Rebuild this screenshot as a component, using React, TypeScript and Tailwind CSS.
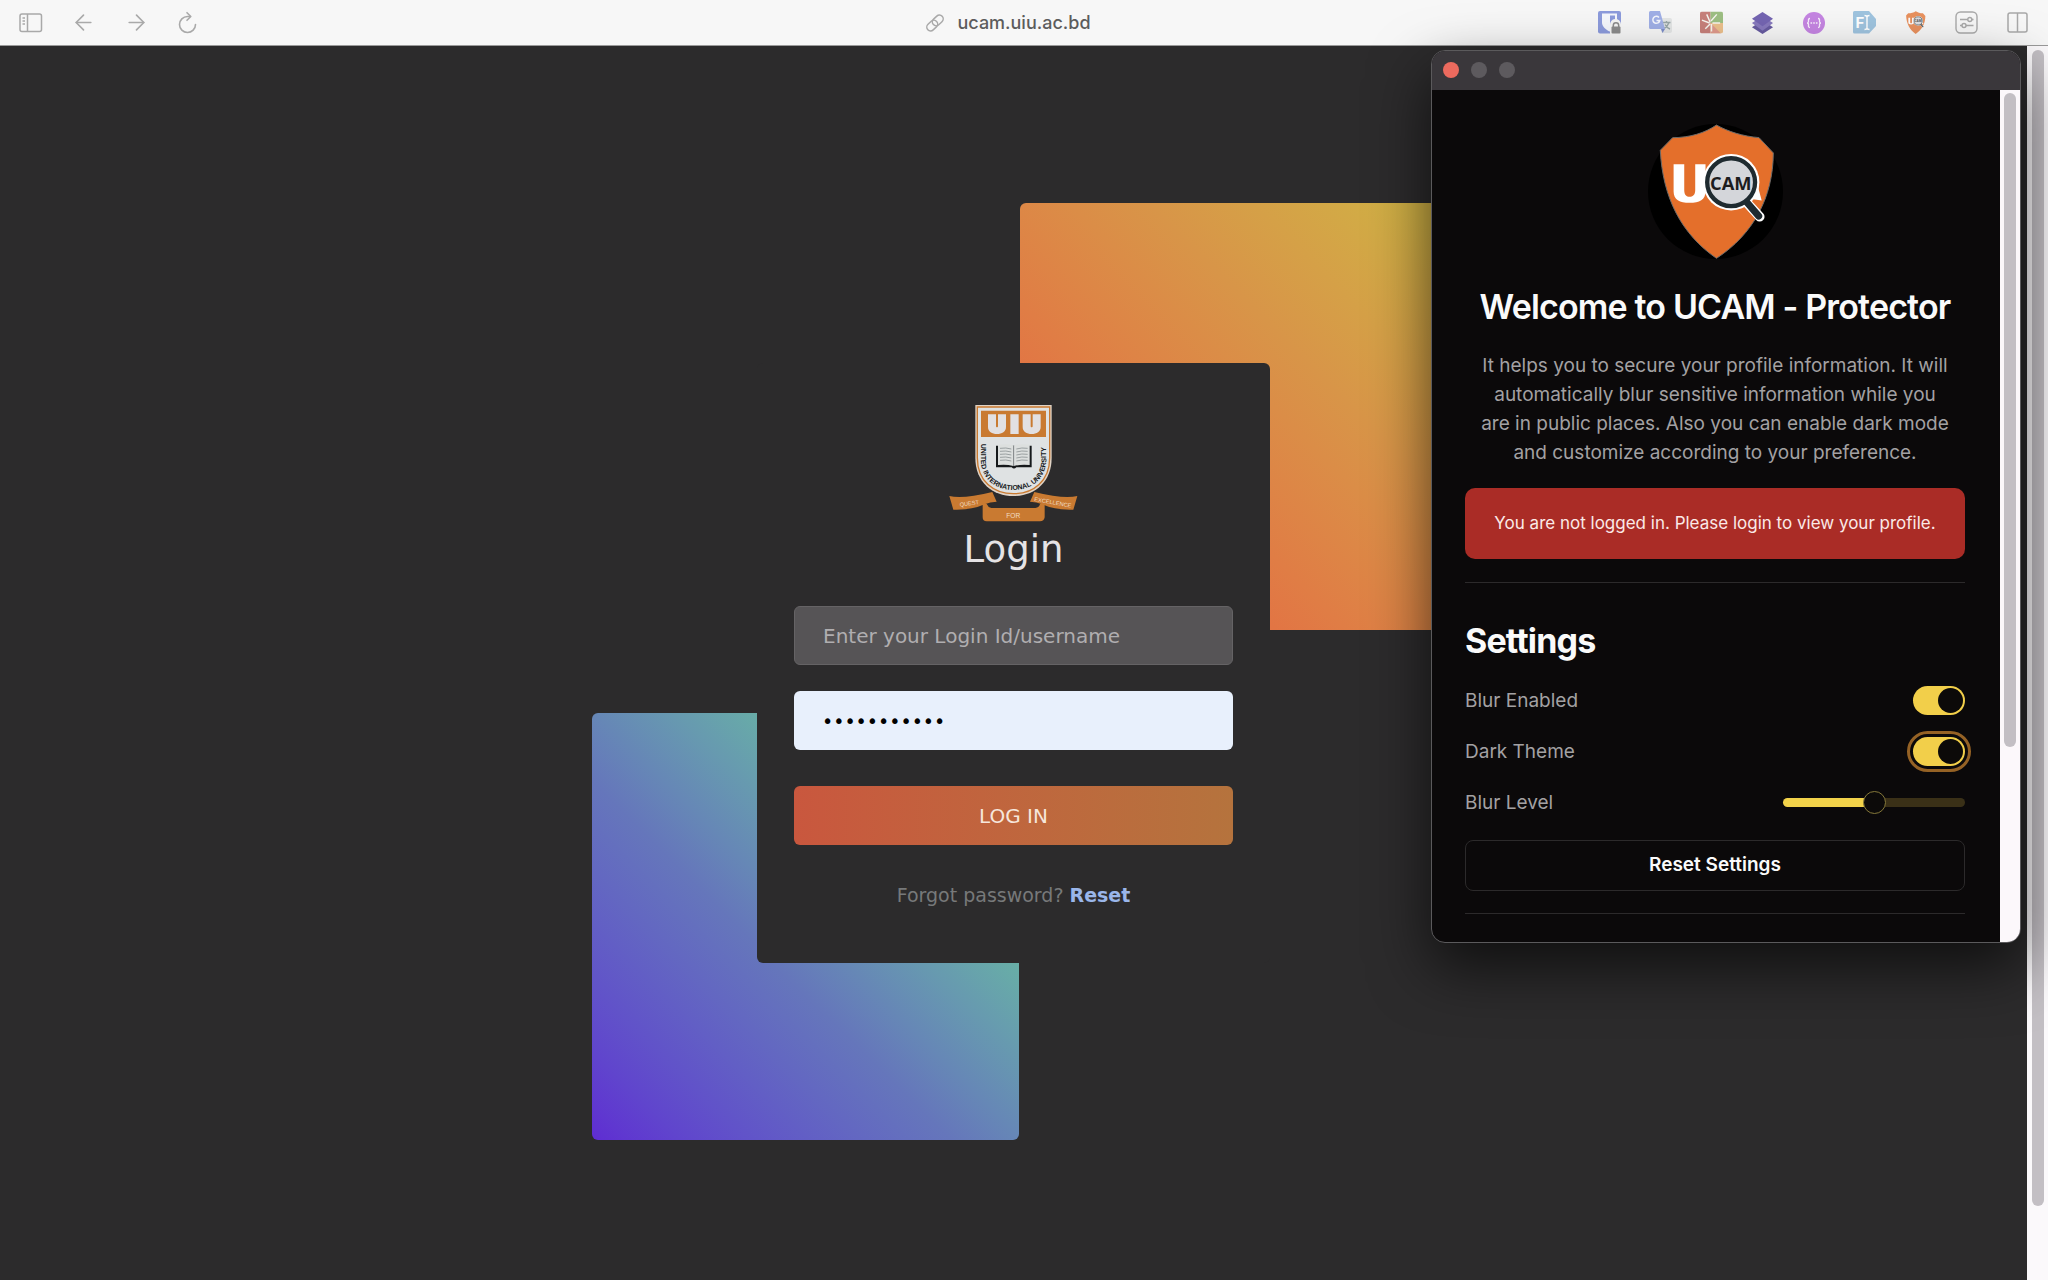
import { useState } from 'react';
import type { ReactNode } from 'react';
import { ArrowLeft, ArrowRight } from 'lucide-react';

const DESCRIPTION =
  'It helps you to secure your profile information. It will automatically blur sensitive information while you are in public places. Also you can enable dark mode and customize according to your preference.';

/* ---------- Browser toolbar ---------- */

function SidebarIcon() {
  return (
    <svg viewBox="0 0 24 20" className="w-6 h-5" fill="none" stroke="currentColor" strokeWidth="1.5">
      <rect x="1" y="1" width="21.5" height="17.5" rx="2" />
      <path d="M8.5 1v17.5M3.5 5h2.5M3.5 8h2.5M3.5 11h2.5" />
    </svg>
  );
}

function ReloadIcon() {
  return (
    <svg viewBox="0 0 20 24" className="w-5 h-6" fill="none" stroke="currentColor" strokeWidth="1.6" strokeLinecap="round" strokeLinejoin="round">
      <path d="M18.500 13.5a8 8 0 1 1-8-8h2.4" />
      <path d="M10 1.700l3.800 3.8-3.800 3.8" />
    </svg>
  );
}

function LinkIcon() {
  return (
    <svg viewBox="0 0 20 20" className="size-5" fill="none" stroke="currentColor" strokeWidth="1.5">
      <g transform="rotate(-43 10 10)">
        <rect x="0.2" y="6.2" width="12" height="7.600" rx="3.8" />
        <rect x="7.8" y="6.2" width="12" height="7.600" rx="3.8" />
      </g>
    </svg>
  );
}

function BitwardenIcon() {
  return (
    <svg viewBox="0 0 23 23" className="size-[23px]">
      <rect width="23" height="22.5" rx="2" fill="#8c9bdc" />
      <path d="M4 2.5h15v9c0 4-3.500 7-7.500 9C7.500 18.500 4 15.500 4 11.500z" fill="#f5f7fc" />
      <path d="M12 4.500h5v8c0 2-2 4-5 5.500z" fill="#8c9bdc" />
      <path d="M12 14a5.500 5.500 0 0 1 11-1v10H12z" fill="#f5f5f4" />
      <rect x="13.500" y="15.500" width="9" height="7" rx="1" fill="#8b8b8b" />
      <path d="M15.300 16v-1.500a2.700 2.700 0 0 1 5.400 0V16" fill="none" stroke="#8b8b8b" strokeWidth="1.500" />
    </svg>
  );
}

function TranslateIcon() {
  return (
    <svg viewBox="0 0 23 23" className="size-[23px]">
      <path d="M8 7h13a2 2 0 0 1 2 2v11a2 2 0 0 1-2 2h-8z" fill="#e4e6e6" />
      <path d="M13.500 11.500h8M17.500 10v1.500M20 11.500c-1 3-3 5-5 6M16 13.500c1 2 2.500 3.500 5 4.500" stroke="#98a6a6" strokeWidth="1.400" fill="none" />
      <path d="M1.500 0H11l5 18H1.500A1.500 1.500 0 0 1 0 16.500v-15A1.500 1.500 0 0 1 1.500 0z" fill="#9fafe6" />
      <path d="M12 18h4l-2.500 4z" fill="#7c8dc9" />
      <path d="M10 6.500a3.500 3.500 0 1 0 .8 3H7.500" stroke="#f4f6fd" strokeWidth="1.500" fill="none" />
    </svg>
  );
}

function BurstIcon() {
  return (
    <svg viewBox="0 0 24 23" className="w-6 h-[23px]">
      <clipPath id="burst">
        <rect width="24" height="23" rx="2" />
      </clipPath>
      <g clipPath="url(#burst)">
        <path d="M0 0h11v23H0z" fill="#c7807b" />
        <path d="M11 0h13v12H11z" fill="#9dbf83" />
        <path d="M11 12h13v11H11z" fill="#ecc08c" />
        <path d="M11 12l11 11H11z" fill="#df9a8c" />
      </g>
      <path d="M10.500 11L7 3M11.500 10l6-7M10 12l-8-3M10.500 13l-5 5M12 13v8M13 12h8" stroke="#f7f5f0" strokeWidth="1.500" />
    </svg>
  );
}

function LayersIcon() {
  return (
    <svg viewBox="0 0 24 24" className="size-6">
      <path d="M1 16.500L12 9l11 7.500L12 23.500z" fill="#675ba0" />
      <path d="M1 12L12 5l11 7-11 8z" fill="#8779bd" />
      <path d="M1 7.500L12 .5l11 7-11 8z" fill="#7465b2" />
    </svg>
  );
}

function BracesIcon() {
  return (
    <svg viewBox="0 0 22 22" className="size-[22px]">
      <circle cx="11" cy="11" r="11" fill="#c585e2" />
      <path d="M7 6.500c-2 0-1.500 1.500-1.500 3S5 11 4 11c1 0 1.500 0 1.500 1.500s-.5 3 1.500 3M15 6.500c2 0 1.500 1.500 1.500 3s.5 1.500 1.500 1.500c-1 0-1.500 0-1.500 1.500s.5 3-1.500 3" fill="none" stroke="#f8effc" strokeWidth="1.300" />
      <path d="M7.500 10.200h1.600v1.600H7.500zM10.200 10.200h1.600v1.600h-1.600zM12.900 10.200h1.600v1.600h-1.600z" fill="#f8effc" />
    </svg>
  );
}

function FontIcon() {
  return (
    <svg viewBox="0 0 23 23" className="size-[23px]">
      <path d="M1.500 0H16l7 8v7l-7 7.500H1.500A1.500 1.500 0 0 1 0 21V1.500A1.500 1.500 0 0 1 1.500 0z" fill="#9fc4df" />
      <text x="2.500" y="17" fontSize="15" fontWeight="700" fontFamily="Inter, sans-serif" fill="#fff">F</text>
      <path d="M11.500 4.500c1.500 0 2.500.5 2.500 1.500 0-1 1-1.500 2.500-1.500M14 6v11M11.500 18.500c1.500 0 2.500-.5 2.500-1.500 0 1 1 1.500 2.500 1.500" stroke="#fff" strokeWidth="1.400" fill="none" />
    </svg>
  );
}

function SlidersIcon() {
  return (
    <svg viewBox="0 0 23 23" className="size-[23px]" fill="none" stroke="#a9a9a9" strokeWidth="1.400">
      <rect x="1" y="1" width="21" height="21" rx="4.500" />
      <path d="M5 8.500h8M17 8.500h1.500M5 14.500h2M11 14.500h7.500" />
      <circle cx="14.800" cy="8.500" r="2" />
      <circle cx="9" cy="14.500" r="2" />
    </svg>
  );
}

function SplitIcon() {
  return (
    <svg viewBox="0 0 21 21" className="size-[21px]" fill="none" stroke="#a9a9a9" strokeWidth="1.500">
      <rect x="1" y="1" width="19" height="19" rx="2" />
      <path d="M10.500 1v19" />
    </svg>
  );
}

const EXTENSIONS: { label: string; icon: ReactNode }[] = [
  { label: 'Password vault', icon: <BitwardenIcon /> },
  { label: 'Translate', icon: <TranslateIcon /> },
  { label: 'Burst', icon: <BurstIcon /> },
  { label: 'Layers', icon: <LayersIcon /> },
  { label: 'JSON', icon: <BracesIcon /> },
  { label: 'Fonts', icon: <FontIcon /> },
  { label: 'UCAM Protector', icon: <ProtectorLogo className="size-[23px] opacity-75" small /> },
  { label: 'Site controls', icon: <SlidersIcon /> },
  { label: 'Split view', icon: <SplitIcon /> },
];

function Toolbar() {
  return (
    <header className="h-[46px] shrink-0 grid grid-cols-[1fr_auto_1fr] items-center bg-[#f7f7f7] border-b border-[#9a9a9a] px-[19px] text-[#a9a9a9]">
      <nav className="flex items-center gap-7">
        <button aria-label="Sidebar"><SidebarIcon /></button>
        <button aria-label="Back"><ArrowLeft size={25} strokeWidth={1.6} /></button>
        <button aria-label="Forward"><ArrowRight size={25} strokeWidth={1.6} /></button>
        <button aria-label="Reload"><ReloadIcon /></button>
      </nav>
      <button className="mr-8 flex items-center gap-3">
        <LinkIcon />
        <span className="text-[18px] leading-6 font-medium text-[#5c5c5c]">ucam.uiu.ac.bd</span>
      </button>
      <div className="flex items-center justify-end gap-7">
        {EXTENSIONS.map((ext) => (
          <button key={ext.label} aria-label={ext.label} className="w-[23px] flex justify-center">
            {ext.icon}
          </button>
        ))}
      </div>
    </header>
  );
}

/* ---------- Logos ---------- */

function ProtectorLogo({ className, small }: { className: string; small?: boolean }) {
  return (
    <svg viewBox="84 43 406 406" className={className}>
      {!small && <circle cx="287" cy="246" r="203" fill="#000" />}
      <path
        d="M290 46C325 66 370 80 418 84L461 130C460 265 400 375 290 447C185 375 128 265 121 122L158 84C210 84 255 70 290 46z"
        fill="#e46f2b"
        stroke={small ? 'none' : '#6b6a68'}
        strokeWidth="3"
      />
      <path d="M161 164h32v78c0 14 7 20 16 20s17-6 17-20v-78h31v82c0 25-18 34-48 34s-48-9-48-34z" fill="#fff" />
      <path d="M402 185l24 88-26-4z" fill="#fff" />
      <path d="M378 276l42 46" stroke="#fff" strokeWidth="29" strokeLinecap="round" />
      <circle cx="334" cy="218" r="85" fill="#fff" />
      <path d="M380 277l37 43" stroke="#1f2b30" strokeWidth="21" strokeLinecap="round" />
      <circle cx="334" cy="218" r="72" fill="#d4d6da" stroke="#1f2b30" strokeWidth="13" />
      <text x="333" y="242" textAnchor="middle" fontFamily="'Open Sans', 'Noto Sans', sans-serif" fontWeight="700" fontSize="55" fill="#1c1c1e">
        CAM
      </text>
    </svg>
  );
}

function UiuCrest() {
  return (
    <svg viewBox="87 45 387 351" className="w-[129px] h-[117px]" role="img" aria-label="United International University">
      <path d="M166 45H395V203C395 277 343 318 280.500 318S166 277 166 203z" fill="#e0d3c6" />
      <path d="M172 51H389V203C389 273 340 311 280.500 311S172 273 172 203z" fill="#dfe2e3" stroke="#c97a31" strokeWidth="4" />
      <path d="M183 62H378V141H183z" fill="#c97a31" />
      <path d="M204 73h24v36c0 4 6 4 6 0V73h24v38c0 14-12 21-27 21s-27-7-27-21zM271 73h25v59h-25zM308 73h24v36c0 4 6 4 6 0V73h24v38c0 14-12 21-27 21s-27-7-27-21z" fill="#e2e0e2" />

      {/* open book */}
      <path d="M228 167h107v65h-46q-7 7-14 0h-47z" fill="#16191b" />
      <path d="M234 164q26-4 46 2v62q-20-6-46-3zM329 164q-26-4-48 2v62q22-6 48-3z" fill="#dcdfde" />
      <path d="M281 166v62" stroke="#7d8486" strokeWidth="2" />
      <path d="M240 175q18-3 34 2M240 184q18-3 34 2M240 193q18-3 34 2M240 202q18-3 34 2M240 211q18-3 34 2M323 175q-18-3-34 2M323 184q-18-3-34 2M323 193q-18-3-34 2M323 202q-18-3-34 2M323 211q-18-3-34 2" fill="none" stroke="#9aa0a1" strokeWidth="3" />

      <path id="crest-arc" d="M182 161V205C182 267 226 300 280.500 300S379 267 379 205V150" fill="none" />
      <text fontFamily="'Liberation Sans Narrow', 'Liberation Sans', sans-serif" fontWeight="700" fontSize="21" fill="#16191b">
        <textPath href="#crest-arc">UNITED INTERNATIONAL UNIVERSITY</textPath>
      </text>

      {/* ribbon */}
      <path d="M88 318q40 10 129-12l13 29q-20 0-36 8-40 18-94 16zM472 318q-40 10-129-12l-13 29q20 0 36 8 40 18 94 16z" fill="#c97a31" />
      <path d="M188 340l12 2q4 10 14 12h132q12-2 14-12l14-2v42q-2 12-14 12H200q-12 0-12-12z" fill="#c97a31" />
      <g fontFamily="'Liberation Sans Narrow', 'Liberation Sans', sans-serif" fontSize="20" fill="#f1dcc5" textAnchor="middle">
        <text x="148" y="346" fontSize="17" transform="rotate(-8 148 340)">QUEST</text>
        <text x="280" y="383">FOR</text>
        <text x="398" y="343" fontSize="17" transform="rotate(10 398 340)">EXCELLENCE</text>
      </g>
    </svg>
  );
}

/* ---------- Login page ---------- */

function LoginCard() {
  return (
    <div className="relative isolate w-[513px]">
      <div className="absolute -z-10 -top-40 -right-[177px] size-[427px] rounded-md bg-linear-to-tr from-[#e27544] from-30% via-[#d89548] via-65% to-[#d0b045] to-95%" />
      <div className="absolute -z-10 -bottom-[177px] -left-[165px] size-[427px] rounded-md bg-linear-to-tr from-[#5f2cd2] via-[#6576bb] via-42% to-[#68b1a5] to-72%" />
      <form
        onSubmit={(e) => e.preventDefault()}
        className="h-[600px] px-[37px] pt-[42px] flex flex-col items-center rounded-md bg-[#2c2b2c] font-['DejaVu_Sans',Verdana,sans-serif]"
      >
        <UiuCrest />
        <h1 className="mt-[5px] mb-[33px] text-[37px] leading-[46px] text-[#e5e3e5]">Login</h1>
        <input
          aria-label="Login Id"
          type="text"
          placeholder="Enter your Login Id/username"
          className="w-full h-[59px] px-7 rounded-md border border-[#656365] bg-[#565456] text-[20px] placeholder:text-[#b0aeb0]"
        />
        <input
          aria-label="Password"
          type="password"
          defaultValue="password123"
          className="mt-[26px] w-full h-[59px] px-7 rounded-md bg-[#e8f0fc] text-[19px] text-black"
        />
        <button className="mt-9 w-full h-[59px] rounded-md bg-linear-to-r from-[#c9573e] to-[#b5733d] text-[20px] text-[#f6e6dc]">
          LOG IN
        </button>
        <p className="mt-9 text-[19px] leading-7 text-[#77797a]">
          Forgot password?{' '}
          <a href="#reset" className="font-bold text-[#9ab6ea]">Reset</a>
        </p>
      </form>
    </div>
  );
}

/* ---------- Extension popup ---------- */

function Toggle({ id, checked, onChange, focused }: { id: string; checked: boolean; onChange: (v: boolean) => void; focused?: boolean }) {
  return (
    <input
      id={id}
      type="checkbox"
      role="switch"
      checked={checked}
      onChange={(e) => onChange(e.target.checked)}
      className={`appearance-none w-[52px] h-[29px] p-[2px] flex rounded-full cursor-pointer bg-[#3a3415] checked:bg-[#f2cf4a] checked:justify-end before:content-[''] before:size-[25px] before:rounded-full before:bg-[#0c0a09] ${
        focused ? 'outline-3 outline-offset-3 outline-[#956225]' : ''
      }`}
    />
  );
}

function Popup() {
  const [blurEnabled, setBlurEnabled] = useState(true);
  const [darkTheme, setDarkTheme] = useState(true);
  const [blurLevel, setBlurLevel] = useState(50);

  return (
    <section className="absolute top-[50px] right-[27px] w-[590px] h-[893px] flex flex-col rounded-[14px] overflow-hidden border border-[#5b5a5c] bg-[#0b090a] shadow-[0_24px_60px_rgba(0,0,0,0.65)]">
      <div className="h-[39px] shrink-0 flex items-center gap-3 px-[11px] pb-[2px] bg-[#3a373b]">
        <button aria-label="Close" className="size-4 rounded-full bg-[#ec6a5e]" />
        <button aria-label="Minimize" className="size-4 rounded-full bg-[#5d5a5e]" />
        <button aria-label="Zoom" className="size-4 rounded-full bg-[#5d5a5e]" />
      </div>

      <div className="flex-1 min-h-0 flex">
        <div className="flex-1 pl-[33px] pr-[35px] pt-[34px] flex flex-col">
          <ProtectorLogo className="self-center size-[135px]" />
          <h2 className="mt-7 self-center text-[34px] leading-10 font-semibold tracking-tight whitespace-nowrap text-[#fafafa]">
            Welcome to UCAM - Protector
          </h2>
          <p className="mt-6 max-w-[470px] self-center text-center text-[19px] leading-[29px] text-[#a3a1a3]">{DESCRIPTION}</p>

          <div role="alert" className="mt-[21px] h-[71px] shrink-0 flex items-center justify-center rounded-[10px] bg-[#aa2c26] text-[17px] text-[#fbe9e7]">
            You are not logged in. Please login to view your profile.
          </div>
          <hr className="mt-[23px] border-[#2c2a2b]" />

          <h2 className="mt-[38px] text-[34px] leading-10 font-bold tracking-tight text-[#fafafa]">Settings</h2>
          <div className="mt-[25px] flex flex-col gap-[22px] text-[19px] leading-[29px] text-[#a3a1a3]">
            <div className="flex items-center justify-between">
              <label htmlFor="blur-enabled">Blur Enabled</label>
              <Toggle id="blur-enabled" checked={blurEnabled} onChange={setBlurEnabled} />
            </div>
            <div className="flex items-center justify-between">
              <label htmlFor="dark-theme">Dark Theme</label>
              <Toggle id="dark-theme" checked={darkTheme} onChange={setDarkTheme} focused />
            </div>
            <div className="flex items-center justify-between">
              <label htmlFor="blur-level">Blur Level</label>
              <input
                id="blur-level"
                type="range"
                value={blurLevel}
                onChange={(e) => setBlurLevel(Number(e.target.value))}
                style={{ backgroundImage: `linear-gradient(to right, #f2d24a ${blurLevel}%, #3a3017 ${blurLevel}%)` }}
                className="appearance-none w-[182px] h-[9px] rounded-full [&::-webkit-slider-thumb]:appearance-none [&::-webkit-slider-thumb]:size-[23px] [&::-webkit-slider-thumb]:rounded-full [&::-webkit-slider-thumb]:border [&::-webkit-slider-thumb]:border-[#85783a] [&::-webkit-slider-thumb]:bg-[#0c0a09]"
              />
            </div>
          </div>
          <button className="mt-[23px] h-[51px] shrink-0 rounded-lg border border-[#2c2a2b] text-[19px] font-semibold text-[#fafafa]">
            Reset Settings
          </button>
          <hr className="mt-[22px] border-[#2c2a2b]" />
        </div>

        <div className="w-5 shrink-0 pt-[3px] flex justify-center bg-[#fcf8fb]">
          <div className="w-3 h-[77%] rounded-full bg-[#c3bfc4]" />
        </div>
      </div>
    </section>
  );
}

export default function App() {
  return (
    <div className="relative h-screen flex flex-col overflow-hidden bg-[#2c2b2c] font-[Inter,sans-serif]">
      <Toolbar />
      <div className="flex-1 min-h-0 flex">
        <main className="flex-1 flex items-center justify-center">
          <LoginCard />
        </main>
        <div className="w-[21px] shrink-0 pt-1 flex justify-center bg-[#fbf9fb]">
          <div className="w-3 h-[94%] rounded-full bg-[#c3bfc4]" />
        </div>
      </div>
      <Popup />
    </div>
  );
}
